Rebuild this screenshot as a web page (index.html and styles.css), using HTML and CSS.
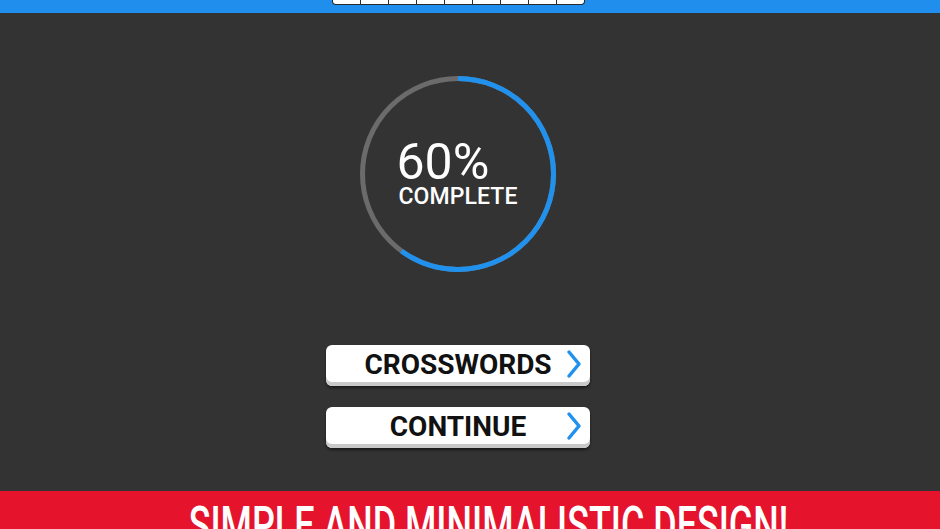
FILE: index.html
```html
<!DOCTYPE html>
<html>
<head>
<meta charset="utf-8">
<link rel="stylesheet" href="styles.css">
</head>
<body>
<div class="screen">
  <header class="topbar">
    <div class="tiles">
      <span class="tile"></span><span class="tile"></span><span class="tile"></span>
      <span class="tile"></span><span class="tile"></span><span class="tile"></span>
      <span class="tile"></span><span class="tile"></span><span class="tile"></span>
    </div>
  </header>
  <main class="main">
    <div class="progress">
      <svg class="ring" width="200" height="200" viewBox="0 0 200 200">
        <circle cx="100" cy="100" r="95.5" fill="none" stroke="#6b6b6b" stroke-width="5"/>
        <circle cx="100" cy="100" r="95.5" fill="none" stroke="#2191ee" stroke-width="5"
          stroke-dasharray="360.05 600" transform="rotate(-90 100 100)"/>
      </svg>
      <div class="label">
        <div class="pct">60%</div>
        <div class="word">COMPLETE</div>
      </div>
    </div>
    <div class="buttons">
      <button class="btn"><span>CROSSWORDS</span>
        <svg class="chev" width="18" height="30" viewBox="0 0 18 30"><path d="M4 3 L14 15 L4 27" fill="none" stroke="#2191ee" stroke-width="3.5" stroke-linecap="round" stroke-linejoin="round"/></svg>
      </button>
      <button class="btn"><span>CONTINUE</span>
        <svg class="chev" width="18" height="30" viewBox="0 0 18 30"><path d="M4 3 L14 15 L4 27" fill="none" stroke="#2191ee" stroke-width="3.5" stroke-linecap="round" stroke-linejoin="round"/></svg>
      </button>
    </div>
  </main>
  <footer class="banner">
    <div class="banner-text">SIMPLE AND MINIMALISTIC DESIGN!</div>
  </footer>
</div>
</body>
</html>
```

FILE: styles.css
```css
html, body {
  margin: 0;
  padding: 0;
  background: #333333;
}
.screen {
  width: 940px;
  height: 529px;
  display: flex;
  flex-direction: column;
  overflow: hidden;
  font-family: Roboto, "Liberation Sans", sans-serif;
}
.topbar {
  height: 13px;
  flex: none;
  background: #1f8eed;
  display: flex;
  justify-content: center;
  padding-right: 23px;
  box-sizing: border-box;
}
.tiles {
  display: flex;
  height: 3.5px;
  border: 1.5px solid #2b2b2b;
  border-top: none;
  border-radius: 0 0 4px 4px;
  overflow: hidden;
  background: #2b2b2b;
  gap: 1.5px;
}
.tile {
  width: 26.5px;
  height: 3.5px;
  background: #ffffff;
}
.main {
  flex: 1;
  display: flex;
  flex-direction: column;
  align-items: center;
  padding-top: 61px;
  padding-right: 24px;
}
.progress {
  display: grid;
  width: 200px;
  height: 200px;
}
.ring, .label {
  grid-area: 1 / 1;
}
.label {
  align-self: center;
  justify-self: center;
  color: #ffffff;
  text-align: left;
}
.pct {
  font-size: 50px;
  font-weight: 400;
  line-height: 46px;
  letter-spacing: 0;
  margin-left: -2px;
}
.word {
  font-size: 23px;
  line-height: 24px;
  font-weight: 500;
  letter-spacing: 0.1px;
}
.buttons {
  margin-top: 71px;
  display: flex;
  flex-direction: column;
  gap: 21px;
}
.btn {
  position: relative;
  width: 264px;
  height: 41px;
  border: none;
  border-radius: 6px;
  background: #ffffff;
  box-shadow: inset 0 -4px 0 #c9c9c9, 0 2px 3px rgba(0,0,0,0.5);
  font-family: Roboto, "Liberation Sans", sans-serif;
  font-weight: 700;
  font-size: 28px;
  color: #111111;
  padding: 0 0 3px 0;
  display: flex;
  align-items: center;
  justify-content: center;
}
.chev {
  position: absolute;
  right: 7px;
  top: 4px;
}
.banner {
  height: 38px;
  flex: none;
  background: #e5132c;
  overflow: hidden;
  display: flex;
  justify-content: center;
}
.banner-text {
  color: #ffffff;
  font-family: Roboto, "Liberation Sans", sans-serif;
  font-weight: 500;
  font-size: 52px;
  line-height: 52px;
  margin-top: 9px;
  white-space: nowrap;
  transform: scaleX(0.69);
  transform-origin: center top;
  margin-left: 37px;
}
```
